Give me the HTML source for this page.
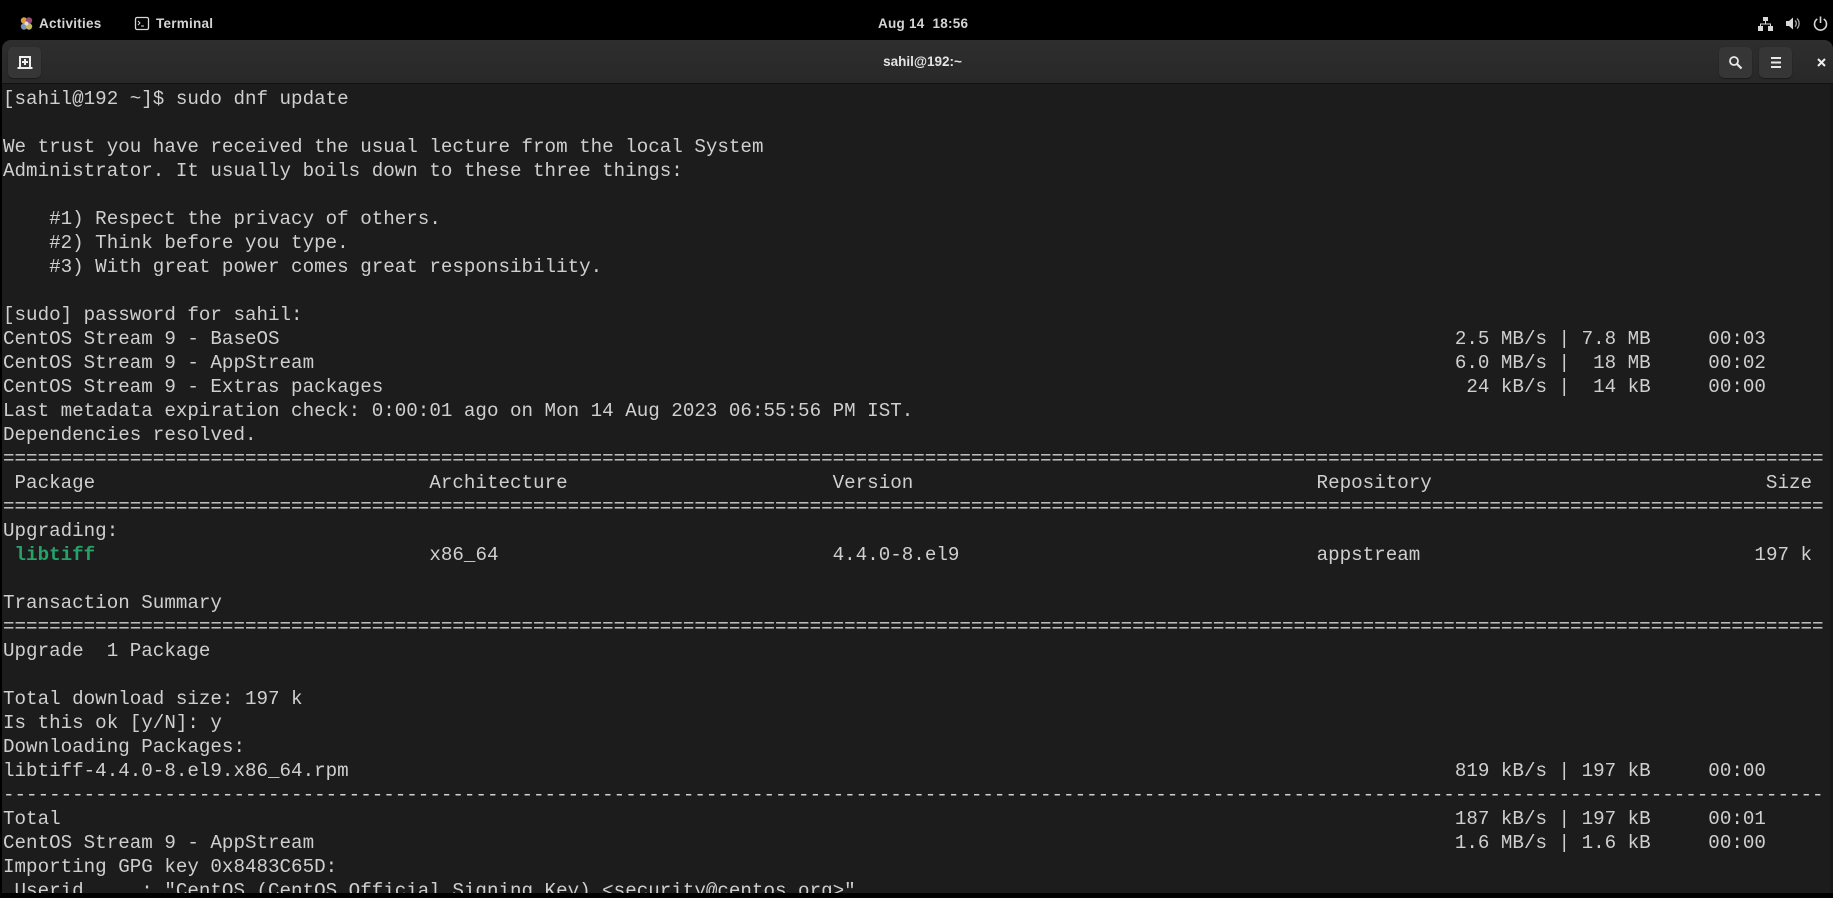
<!DOCTYPE html>
<html><head><meta charset="utf-8">
<style>
html,body{margin:0;padding:0;background:#000;width:1833px;height:898px;overflow:hidden}
*{box-sizing:border-box}
.top{position:absolute;font:bold 13.5px/16px "Liberation Sans",sans-serif;color:#d4d4d4;white-space:pre;letter-spacing:.25px}
#win{position:absolute;left:2px;top:40px;width:1831px;height:853px;background:#1c1c1c;border-radius:9px 9px 0 0;overflow:hidden}
#hdr{position:absolute;left:0;top:0;width:100%;height:44px;background:linear-gradient(#2e2e2e,#282828);border-bottom:1px solid #111}
#sb{position:absolute;right:0;top:44px;width:3px;bottom:0;background:#181818}
.btn{position:absolute;top:7px;width:33px;height:31px;background:#363636;border-radius:5px;box-shadow:0 1px 1px #1a1a1a}
pre{position:absolute;left:1px;top:47px;margin:0;font:19.2px/24px "Liberation Mono",monospace;letter-spacing:.008px;color:#cfcfcf}
.g{color:#26a269;font-weight:bold}
svg{position:absolute}
</style></head><body>
<svg style="left:19px;top:16px" width="15" height="15" viewBox="0 0 15 15"><circle cx="5" cy="4.500" r="3.200" fill="#d8a040"/><circle cx="10" cy="4.500" r="3.200" fill="#9a4a78"/><circle cx="5" cy="10.500" r="3.200" fill="#8090b8"/><circle cx="10" cy="10.500" r="3.200" fill="#c0b860"/><circle cx="7.500" cy="7.500" r="2" fill="#ddd"/></svg>
<div class="top" style="left:39px;top:16px">Activities</div>
<svg style="left:134px;top:16px" width="16" height="16" viewBox="0 0 16 16" fill="none" stroke="#d8d8d8"><rect x="1.500" y="1.500" width="13" height="12" rx="1.500" stroke-width="1.300"/><path d="M4 5l2 2-2 2M7 10h3" stroke-width="1"/></svg>
<div class="top" style="left:156px;top:16px">Terminal</div>
<div class="top" style="left:878px;top:16px">Aug 14  18:56</div>
<svg style="left:1758px;top:16px" width="15" height="15" viewBox="0 0 15 15" fill="#d8d8d8"><rect x="5" y="1" width="5" height="4"/><rect x="0" y="10" width="5" height="5"/><rect x="10" y="10" width="5" height="5"/><path d="M7 5h1v2.500h5V10h-1V8.500H3V10H2V7.500h5z"/></svg>
<svg style="left:1785px;top:16px" width="16" height="15" viewBox="0 0 16 15" fill="#d8d8d8"><path d="M1 5h3l4-3.500v12L4 10H1z"/><path d="M10 4.500a4 4 0 0 1 0 6M12 2.500a7 7 0 0 1 0 10" fill="none" stroke="#a8a8a8" stroke-width="1.300"/></svg>
<svg style="left:1813px;top:16px" width="15" height="15" viewBox="0 0 15 15" fill="none" stroke="#d8d8d8" stroke-width="1.600"><path d="M4.300 3a6 6 0 1 0 6.400 0M7.500 .5v6.500"/></svg>
<div id="win">
<div id="hdr">
<div class="btn" style="left:6px"></div>
<svg style="left:15px;top:14px" width="16" height="16" viewBox="0 0 16 16" fill="none" stroke="#eee" stroke-width="2"><path d="M3 13V3h10v10M0.500 14h15"/><path d="M8 5v6M5 8h6" stroke-width="2"/></svg>
<div class="top" style="left:0;width:1841px;text-align:center;top:14px;color:#e4e4e4;letter-spacing:0">sahil@192:~</div>
<div class="btn" style="left:1717px"></div>
<svg style="left:1726px;top:15px" width="15" height="15" viewBox="0 0 15 15" fill="none" stroke="#e8e8e8" stroke-width="1.800"><circle cx="6" cy="6" r="4"/><path d="M9 9l4.500 4.500" stroke-width="2.200"/></svg>
<div class="btn" style="left:1757px"></div>
<svg style="left:1767px;top:16px" width="14" height="13" viewBox="0 0 14 13" fill="#e8e8e8"><rect x="2" y="1" width="10" height="2"/><rect x="2" y="5.500" width="10" height="2"/><rect x="2" y="10" width="10" height="2"/></svg>
<svg style="left:1814px;top:17px" width="11" height="11" viewBox="0 0 11 11" fill="none" stroke="#eee" stroke-width="2"><path d="M2 2l7 7M9 2l-7 7"/></svg>
</div>
<div id="sb"></div>
<pre>[sahil@192 ~]$ sudo dnf update

We trust you have received the usual lecture from the local System
Administrator. It usually boils down to these three things:

    #1) Respect the privacy of others.
    #2) Think before you type.
    #3) With great power comes great responsibility.

[sudo] password for sahil: 
CentOS Stream 9 - BaseOS                                                                                                      2.5 MB/s | 7.8 MB     00:03
CentOS Stream 9 - AppStream                                                                                                   6.0 MB/s |  18 MB     00:02
CentOS Stream 9 - Extras packages                                                                                              24 kB/s |  14 kB     00:00
Last metadata expiration check: 0:00:01 ago on Mon 14 Aug 2023 06:55:56 PM IST.
Dependencies resolved.
==============================================================================================================================================================
 Package                             Architecture                       Version                                   Repository                             Size
==============================================================================================================================================================
Upgrading:
 <span class="g">libtiff</span>                             x86_64                             4.4.0-8.el9                               appstream                             197 k

Transaction Summary
==============================================================================================================================================================
Upgrade  1 Package

Total download size: 197 k
Is this ok [y/N]: y
Downloading Packages:
libtiff-4.4.0-8.el9.x86_64.rpm                                                                                                819 kB/s | 197 kB     00:00
--------------------------------------------------------------------------------------------------------------------------------------------------------------
Total                                                                                                                         187 kB/s | 197 kB     00:01
CentOS Stream 9 - AppStream                                                                                                   1.6 MB/s | 1.6 kB     00:00
Importing GPG key 0x8483C65D:
 Userid     : "CentOS (CentOS Official Signing Key) &lt;security@centos.org&gt;"</pre>
</div>
</body></html>
